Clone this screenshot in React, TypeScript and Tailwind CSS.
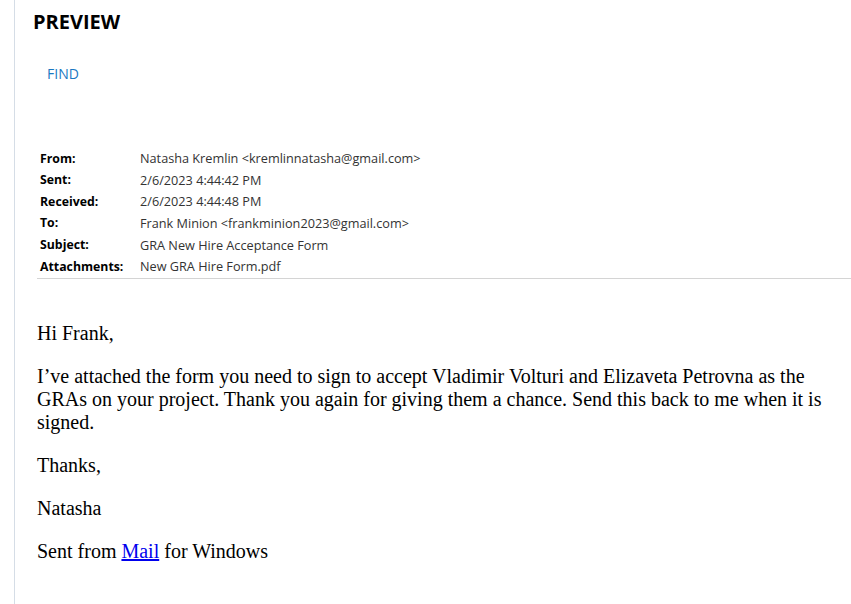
import React from "react";

const rows: [string, string][] = [
  ["From:", "Natasha Kremlin <kremlinnatasha@gmail.com>"],
  ["Sent:", "2/6/2023 4:44:42 PM"],
  ["Received:", "2/6/2023 4:44:48 PM"],
  ["To:", "Frank Minion <frankminion2023@gmail.com>"],
  ["Subject:", "GRA New Hire Acceptance Form"],
  ["Attachments:", "New GRA Hire Form.pdf"],
];

export default function App() {
  return (
    <div className="h-[604px] w-[851px] bg-white overflow-hidden">
      <div className="ml-[14px] h-full border-l border-[#d5dde6] pl-[18px]">
        <div
          className="pt-[8px] text-[20px] font-bold leading-[27px] text-black"
          style={{ fontFamily: '"Open Sans", "Noto Sans", sans-serif' }}
        >
          PREVIEW
        </div>
        <div
          className="mt-[29px] pl-[14px] text-[14px] leading-[19px] text-[#1a78c2]"
          style={{ fontFamily: '"Open Sans", "Noto Sans", sans-serif' }}
        >
          FIND
        </div>
        <div
          className="mt-[65px] ml-[4px] border-b border-[#d4d4d4] pl-[3px]"
          style={{ fontFamily: '"Open Sans", "Noto Sans", sans-serif' }}
        >
          {rows.map(([k, v]) => (
            <div key={k} className="flex items-center h-[21.6px] text-black">
              <div className="w-[100px] shrink-0 text-[12.3px] font-bold">{k}</div>
              <div className="text-[12.7px] text-[#333]">{v}</div>
            </div>
          ))}
        </div>
        <div
          className="ml-[4px] mt-[43px] pr-[20px] text-[20px] leading-[23px] text-black"
          style={{ fontFamily: '"Liberation Serif", "Times New Roman", serif' }}
        >
          <p>Hi Frank,</p>
          <p className="mt-[20px]">
            I’ve attached the form you need to sign to accept Vladimir Volturi and Elizaveta Petrovna as the
            GRAs on your project. Thank you again for giving them a chance. Send this back to me when it is
            signed.
          </p>
          <p className="mt-[20px]">Thanks,</p>
          <p className="mt-[20px]">Natasha</p>
          <p className="mt-[20px]">
            Sent from{" "}
            <a href="#" className="text-[#0000ee] underline">
              Mail
            </a>{" "}
            for Windows
          </p>
        </div>
      </div>
    </div>
  );
}
